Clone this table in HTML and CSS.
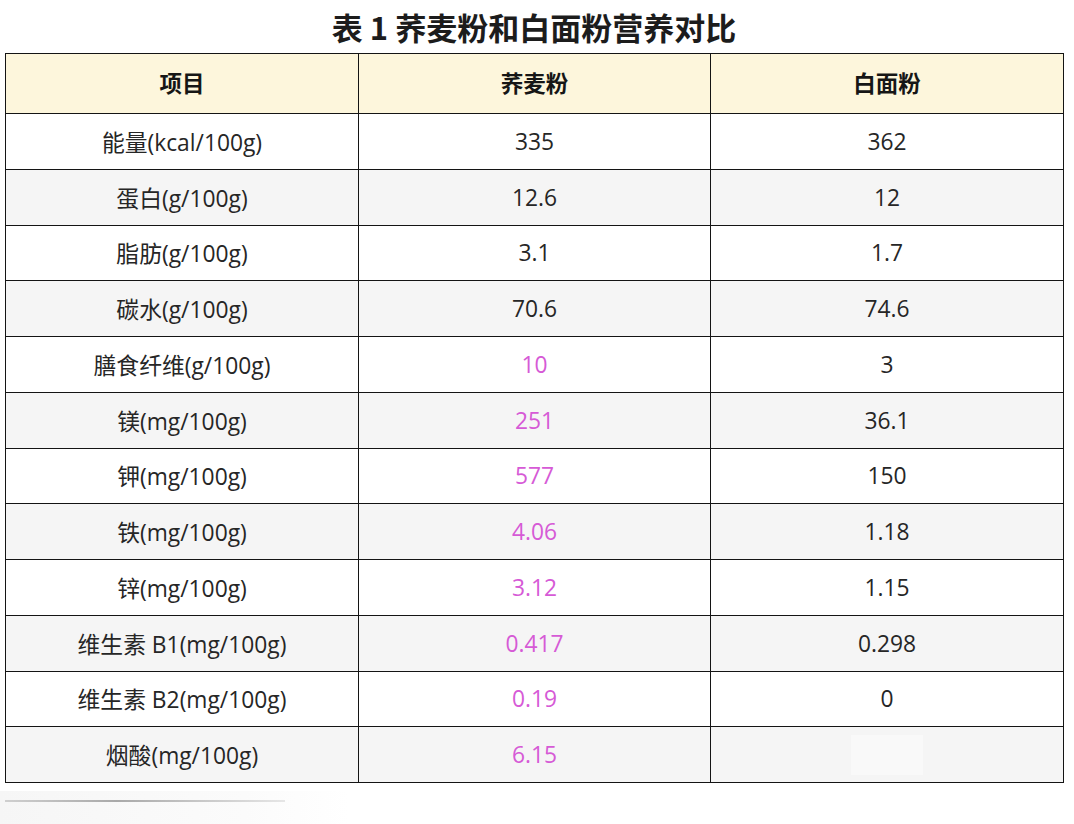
FILE: index.html
```html
<!DOCTYPE html>
<html lang="zh-CN">
<head>
<meta charset="utf-8">
<title>表 1 荞麦粉和白面粉营养对比</title>
<link rel="stylesheet" href="styles.css">
</head>
<body>
<div class="page">
  <h1 class="title">表 1 荞麦粉和白面粉营养对比</h1>
  <table class="cmp">
    <colgroup><col class="c1"><col class="c2"><col class="c3"></colgroup>
    <thead>
      <tr><th><span class="hd">项目</span></th><th><span class="hd">荞麦粉</span></th><th><span class="hd">白面粉</span></th></tr>
    </thead>
    <tbody>
      <tr><td>能量(kcal/100g)</td><td>335</td><td>362</td></tr>
      <tr><td>蛋白(g/100g)</td><td>12.6</td><td>12</td></tr>
      <tr><td>脂肪(g/100g)</td><td>3.1</td><td>1.7</td></tr>
      <tr><td>碳水(g/100g)</td><td>70.6</td><td>74.6</td></tr>
      <tr><td>膳食纤维(g/100g)</td><td class="hi">10</td><td>3</td></tr>
      <tr><td>镁(mg/100g)</td><td class="hi">251</td><td>36.1</td></tr>
      <tr><td>钾(mg/100g)</td><td class="hi">577</td><td>150</td></tr>
      <tr><td>铁(mg/100g)</td><td class="hi">4.06</td><td>1.18</td></tr>
      <tr><td>锌(mg/100g)</td><td class="hi">3.12</td><td>1.15</td></tr>
      <tr><td>维生素 B1(mg/100g)</td><td class="hi">0.417</td><td>0.298</td></tr>
      <tr><td>维生素 B2(mg/100g)</td><td class="hi">0.19</td><td>0</td></tr>
      <tr><td>烟酸(mg/100g)</td><td class="hi">6.15</td><td><span class="blank"></span></td></tr>
    </tbody>
  </table>
  <div class="footer-smudge"><span class="line"></span></div>
</div>
</body>
</html>
```
FILE: styles.css
```css
html, body {
  margin: 0;
  padding: 0;
  background: #ffffff;
}
body {
  font-family: "Open Sans", "Noto Sans CJK SC", sans-serif;
  color: #1a1a1a;
}
.page {
  width: 1074px;
  height: 824px;
  overflow: hidden;
  position: relative;
}
.title {
  margin: 0;
  height: 53px;
  display: flex;
  align-items: center;
  justify-content: center;
  font-family: "Noto Sans CJK SC", sans-serif;
  font-size: 31px;
  font-weight: 700;
  color: #1c1c1c;
  padding-right: 6px;
  box-sizing: border-box;
}
.cmp {
  margin-left: 5px;
  width: 1058px;
  border-collapse: collapse;
  table-layout: fixed;
}
.cmp col.c1 { width: 353px; }
.cmp col.c2 { width: 352px; }
.cmp col.c3 { width: 353px; }
.cmp th, .cmp td {
  border: 1.5px solid #141414;
  text-align: center;
  vertical-align: middle;
  padding: 0;
  font-size: 22.8px;
}
.cmp thead tr {
  height: 60px;
  background: #fdf6dc;
}
.cmp th {
  font-family: "Noto Sans CJK SC", sans-serif;
  font-weight: 700;
  font-size: 22.5px;
  color: #161616;
}
.cmp th .hd {
  display: inline-block;
  transform: translateY(-2px);
}
.cmp tbody tr {
  height: 55.75px;
}
.cmp tbody tr:nth-child(odd) { background: #ffffff; }
.cmp tbody tr:nth-child(even) { background: #f5f5f5; }
.cmp td { color: #262626; }
.cmp td.hi { color: #d65ad6; }
.blank {
  display: inline-block;
  width: 72px;
  height: 40px;
  background: #f9f9f9;
  vertical-align: middle;
}
.footer-smudge {
  margin-top: 8px;
  width: 350px;
  height: 34px;
  background: linear-gradient(to right, #f6f6f6, #fbfbfb 70%, #ffffff);
  position: relative;
}
.footer-smudge .line {
  position: absolute;
  left: 5px;
  top: 9px;
  width: 280px;
  height: 2px;
  background: linear-gradient(to right, #cfcfcf, #a9a9a9 40%, #e6e6e6 100%);
}
```
